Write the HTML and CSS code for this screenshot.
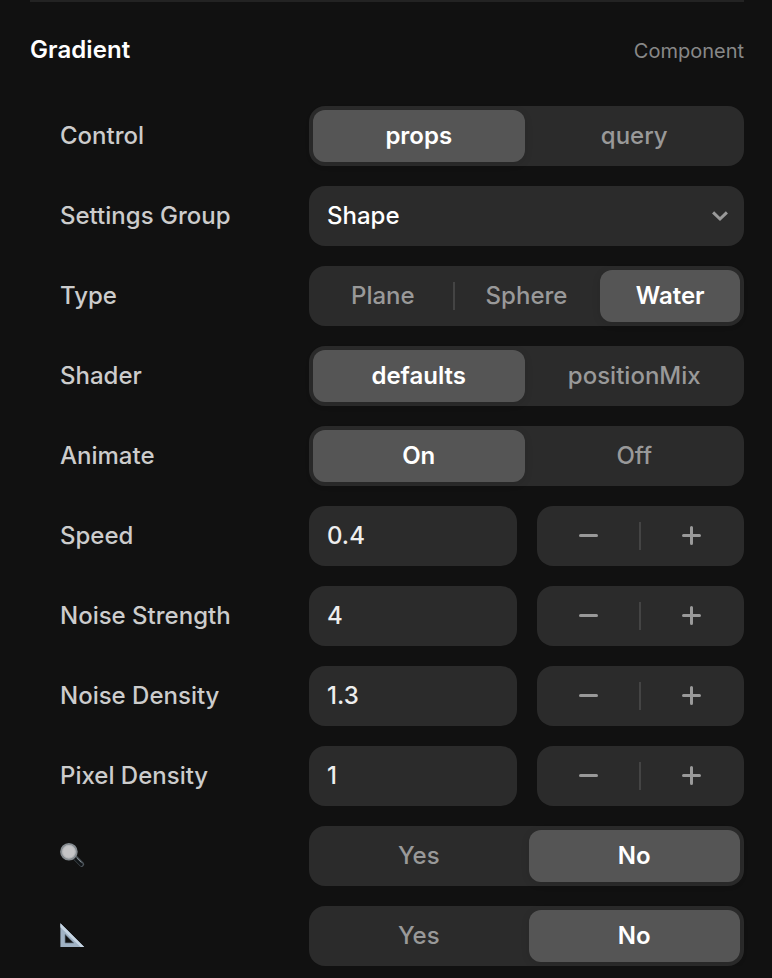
FILE: index.html
```html
<!DOCTYPE html>
<html lang="en">
<head>
<meta charset="utf-8">
<title>Gradient</title>
<link rel="stylesheet" href="styles.css">
</head>
<body>
<svg width="0" height="0" class="defs" aria-hidden="true">
  <symbol id="minus" viewBox="0 0 19 19"><path d="M1.5 9.5H17.5" stroke="currentColor" stroke-width="3" stroke-linecap="round"/></symbol>
  <symbol id="plus" viewBox="0 0 19 19"><path d="M1.5 9.5H17.5M9.5 1.5V17.5" stroke="currentColor" stroke-width="3" stroke-linecap="round"/></symbol>
</svg>
<main class="panel">
  <header class="panel-header">
    <h1 class="title">Gradient</h1>
    <span class="kind">Component</span>
  </header>
  <div class="rows">
    <div class="row"><span class="label">Control</span>
      <div class="segments"><div class="segment selected">props</div><div class="segment">query</div></div></div>
    <div class="row"><span class="label">Settings Group</span>
      <div class="field select"><span>Shape</span><svg class="chevron" width="20" height="12" viewBox="0 0 20 12" fill="none"><path d="M3.1 2.3L10 9L16.9 2.3" stroke="currentColor" stroke-width="3"/></svg></div></div>
    <div class="row"><span class="label">Type</span>
      <div class="segments"><div class="segment divided">Plane</div><div class="segment">Sphere</div><div class="segment selected">Water</div></div></div>
    <div class="row"><span class="label">Shader</span>
      <div class="segments"><div class="segment selected">defaults</div><div class="segment">positionMix</div></div></div>
    <div class="row"><span class="label">Animate</span>
      <div class="segments"><div class="segment selected">On</div><div class="segment">Off</div></div></div>
    <div class="row"><span class="label">Speed</span>
      <div class="number"><div class="field">0.4</div><div class="stepper"><span class="step"><svg><use href="#minus"/></svg></span><span class="step"><svg><use href="#plus"/></svg></span></div></div></div>
    <div class="row"><span class="label">Noise Strength</span>
      <div class="number"><div class="field">4</div><div class="stepper"><span class="step"><svg><use href="#minus"/></svg></span><span class="step"><svg><use href="#plus"/></svg></span></div></div></div>
    <div class="row"><span class="label">Noise Density</span>
      <div class="number"><div class="field">1.3</div><div class="stepper"><span class="step"><svg><use href="#minus"/></svg></span><span class="step"><svg><use href="#plus"/></svg></span></div></div></div>
    <div class="row"><span class="label">Pixel Density</span>
      <div class="number"><div class="field">1</div><div class="stepper"><span class="step"><svg><use href="#minus"/></svg></span><span class="step"><svg><use href="#plus"/></svg></span></div></div></div>
    <div class="row"><span class="label">
        <svg class="glyph" width="26" height="26" viewBox="0 0 26 26">
          <path d="M15 14.6L21.7 21.3" stroke="#4d555b" stroke-width="5" stroke-linecap="round"/>
          <path d="M15.2 15.4L21.2 21.4" stroke="#111518" stroke-width="3" stroke-linecap="round"/>
          <path d="M16.6 14.8L21.5 19.6" stroke="#8a9298" stroke-width="1"/>
          <circle cx="8.9" cy="8.8" r="7.8" fill="#c4c4c6" stroke="#858b90" stroke-width="2"/>
          <circle cx="8.9" cy="8.8" r="6.3" fill="none" stroke="#aeb1b4" stroke-width=".8"/>
        </svg></span>
      <div class="segments"><div class="segment">Yes</div><div class="segment selected">No</div></div></div>
    <div class="row"><span class="label">
        <svg class="glyph" width="26" height="26" viewBox="0 0 26 26">
          <path d="M.4 .2V24H24.2ZM5 11.3L13.8 20H5Z" fill="#a0b2c4" fill-rule="evenodd"/>
          <path d="M.4 .2L24.2 24H20.6L.4 4.2Z" fill="#c6d5e3"/>
          <path d="M5 20V11.3L13.8 20Z" fill="none" stroke="#6e8091" stroke-width=".7"/>
        </svg></span>
      <div class="segments"><div class="segment">Yes</div><div class="segment selected">No</div></div></div>
  </div>
</main>
</body>
</html>
```
FILE: styles.css
```css
* { box-sizing: border-box; }
html { background: #111; overflow: hidden; }
body {
  margin: 0;
  background: #111;
  color: #fff;
  font: 500 24px/30px Inter, "Liberation Sans", sans-serif;
}
.defs { position: absolute; }
.panel {
  margin: 0 28px 0 30px;
  border-top: 2px solid #232323;
}
.panel-header {
  display: flex;
  justify-content: space-between;
  align-items: baseline;
  height: 104px;
  padding-top: 33px;
}
.title { margin: 0; font-size: 24px; font-weight: 600; line-height: 30px; letter-spacing: .08px; }
.kind { color: #888; font-size: 20px; font-weight: 400; }
.rows { display: grid; gap: 20px; padding-left: 30px; }
.row { display: grid; grid-template-columns: 249px 435px; height: 60px; align-items: center; }
.label { color: #ccc; }
.glyph { display: block; }
.segments, .field, .stepper { height: 60px; border-radius: 16px; background: #2b2b2b; }
.segments { display: flex; gap: 4px; padding: 4px; }
.segment {
  flex: 1 1 0;
  position: relative;
  display: flex;
  align-items: center;
  justify-content: center;
  border-radius: 12px;
  color: #999;
}
.segment.selected {
  background: #555;
  color: #fff;
  font-weight: 600;
  box-shadow: 0 2px 8px rgba(0, 0, 0, .1);
}
.divided::after, .stepper::after {
  content: "";
  position: absolute;
  width: 2px;
  height: 28px;
  background: #444;
}
.divided::after { top: 12px; right: -2px; }
.field { display: flex; align-items: center; padding: 0 18px; }
.select { justify-content: space-between; padding-right: 14px; }
.chevron { color: #999; }
.number { display: grid; grid-template-columns: 1fr 1fr; gap: 20px; }
.number .field { color: #eee; }
.stepper { display: flex; position: relative; color: #999; }
.stepper::after { top: 16px; left: calc(50% - 1px); }
.step { flex: 1; display: flex; align-items: center; justify-content: center; padding-bottom: 1px; }
.step:last-child { padding-right: 1px; }
.step svg { width: 19px; height: 19px; fill: none; }
```
